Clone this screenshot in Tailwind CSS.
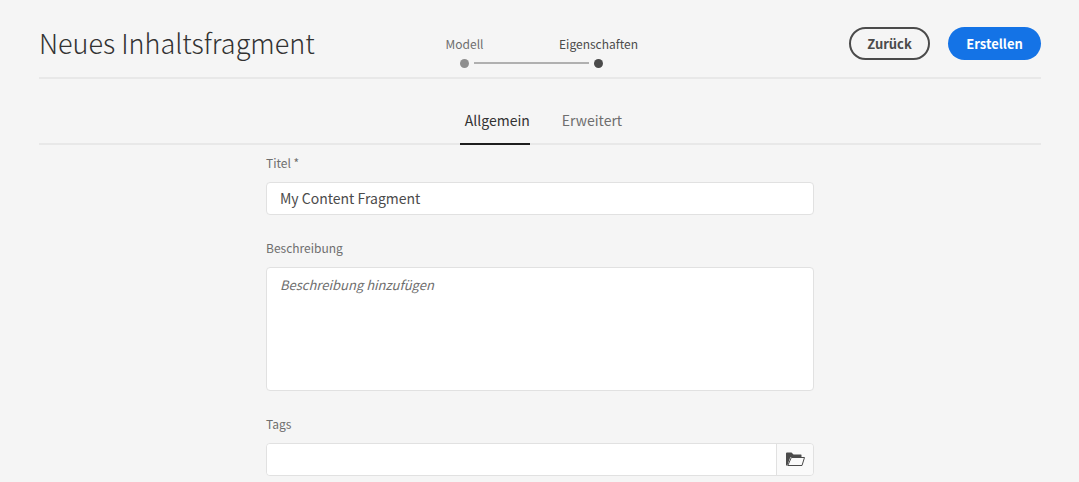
<!DOCTYPE html>
<html lang="de">
<head>
<meta charset="utf-8">
<meta name="viewport" content="width=device-width, initial-scale=1">
<title>Neues Inhaltsfragment</title>
<script src="https://cdn.jsdelivr.net/npm/@tailwindcss/browser@4"></script>
</head>
<body class="min-h-screen overflow-x-hidden bg-[#f5f5f5] pr-[38px] pl-[39px] font-['Noto_Sans_CJK_SC','Noto_Sans',sans-serif] text-sm text-[#4b4b4b]">
  <header class="grid grid-cols-[1fr_auto_1fr] items-start border-b-2 border-[#e8e8e8] pt-[27px] pb-[9px]">
    <h1 class="text-[27px] leading-8 font-light whitespace-nowrap text-[#323232]">Neues Inhaltsfragment</h1>
    <ol class="flex pt-[7px] pl-[2px] text-xs leading-5">
      <li class="flex w-[38px] flex-col items-center text-[#6e6e6e]">
        <span>Modell</span>
        <span class="mt-[5px] size-[9px] rounded-full bg-[#8e8e8e]"></span>
      </li>
      <li aria-hidden="true" class="mt-7 -mr-7 -ml-[10px] h-[2px] w-[115px] bg-[#b0b0b0]"></li>
      <li aria-current="step" class="flex w-[76px] flex-col items-center">
        <span>Eigenschaften</span>
        <span class="mt-[5px] size-[9px] rounded-full bg-[#4b4b4b]"></span>
      </li>
    </ol>
    <div class="flex justify-end gap-[18px] leading-5 font-bold">
      <button type="button" class="h-[33px] w-[81px] rounded-full border-2 border-[#4b4b4b] text-[13px]">Zurück</button>
      <button type="button" class="h-[33px] w-[93px] rounded-full bg-[#1473e6] text-[13px] text-white">Erstellen</button>
    </div>
  </header>
  <div role="tablist" class="flex h-[66px] items-end justify-center gap-8 border-b-2 border-[#e8e8e8] pl-[2px]">
    <button type="button" role="tab" aria-selected="true" class="-mb-[2px] h-9 border-b-2 border-[#1e1e1e] pb-3 pl-[5px] text-sm leading-5 text-[#323232]">Allgemein</button>
    <button type="button" role="tab" aria-selected="false" class="-mb-[2px] h-9 border-b-2 border-transparent pb-3 text-sm leading-5 text-[#6e6e6e]">Erweitert</button>
  </div>
  <form class="mx-auto w-full max-w-[548px] pt-2">
    <label for="title" class="block text-xs leading-5 text-[#6e6e6e]">Titel *</label>
    <input id="title" type="text" value="My Content Fragment" class="mt-[9px] block h-[33px] w-full rounded-sm border border-[#e1e1e1] bg-white px-[13px] pb-[2px] text-sm text-[#4b4b4b] outline-none">
    <label for="description" class="mt-[23px] block text-xs leading-5 text-[#6e6e6e]">Beschreibung</label>
    <textarea id="description" placeholder="Beschreibung hinzufügen" class="mt-[9px] block h-[124px] w-full resize-none rounded-sm border border-[#e1e1e1] bg-white px-[13px] py-[7px] text-[13px] leading-5 outline-none placeholder:text-[#6e6e6e] placeholder:italic"></textarea>
    <label for="tags" class="mt-[23px] block text-xs leading-5 text-[#6e6e6e]">Tags</label>
    <div class="mt-[9px] flex h-[33px] overflow-hidden rounded-sm border border-[#e1e1e1]">
      <input id="tags" type="text" class="min-w-0 flex-1 bg-white px-[13px] text-sm outline-none">
      <button type="button" aria-label="Tags auswählen" class="flex w-[37px] items-center justify-center border-l border-[#e1e1e1] bg-[#fafafa]">
        <svg width="20" height="15" viewBox="0 0 20 15" aria-hidden="true">
          <path fill="#4b4b4b" d="M1 1.500Q1 .5 2 .5h4.500l2 2H16q.5 0 .5.500V5H6.200q-.7 0-1 .600L2.300 13.500H1.500Q1 13.500 1 13z"/>
          <path fill="#fafafa" stroke="#4b4b4b" stroke-linejoin="round" d="M6.300 5.500h13.200l-2.500 8H2.800z"/>
        </svg>
      </button>
    </div>
  </form>
</body>
</html>
